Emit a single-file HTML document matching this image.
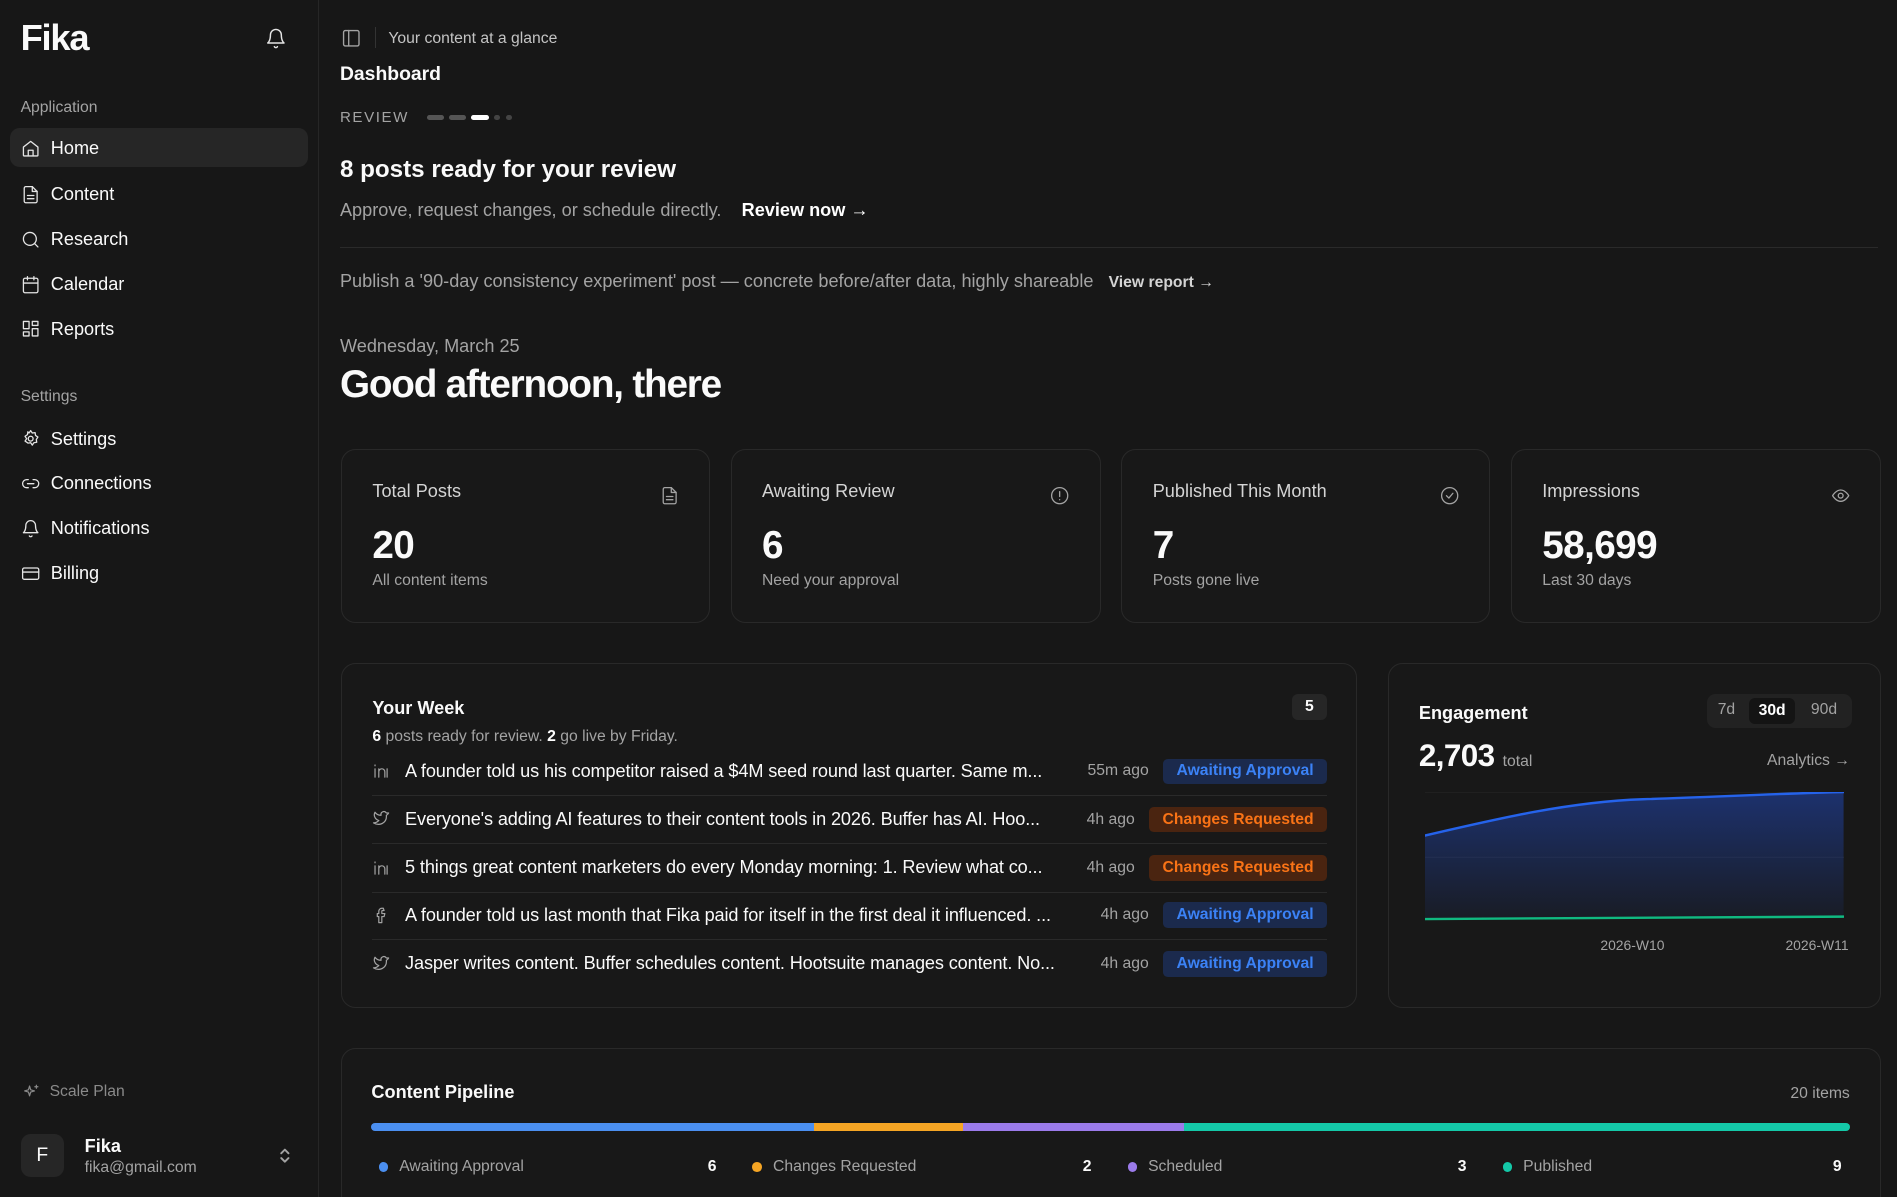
<!DOCTYPE html>
<html><head><meta charset="utf-8"><style>
*{box-sizing:border-box;margin:0;padding:0}
html,body{width:1897px;height:1197px;overflow:hidden;background:#171717}
#z{zoom:1.2098;width:1568px;height:990px;position:relative;font-family:"Liberation Sans",sans-serif;color:#fafafa;background:#171717}
.a{position:absolute;white-space:nowrap}
.g{color:#a3a3a3}
svg{fill:none;stroke:currentColor;stroke-width:1.6;stroke-linecap:round;stroke-linejoin:round}
.side{position:absolute;left:0;top:0;width:264px;height:990px;border-right:1px solid #262626}
.nav{position:absolute;left:17px;font-size:15px;display:flex;align-items:center;gap:9px;height:20px}
.nav svg{width:16px;height:16px;color:#e5e5e5}
.card{position:absolute;border:1px solid #292929;border-radius:12px;background:#181818}
.st .t{position:absolute;left:25px;top:26px;font-size:15px;color:#d4d4d4}
.st .n{position:absolute;left:25px;top:61px;font-size:32px;font-weight:bold;letter-spacing:-.5px}
.st .s{position:absolute;left:25px;top:101px;font-size:13px;color:#a3a3a3}
.st svg{position:absolute;right:25px;top:30px;width:16px;height:16px;color:#a3a3a3}
.row{position:absolute;left:25px;width:789px;height:40px;display:flex;align-items:center;font-size:15px;border-bottom:1px solid #2a2a2a}
.row svg{width:15px;height:15px;color:#a3a3a3;margin-right:12px;flex:none}
.row .tx{flex:1;overflow:hidden;white-space:nowrap;letter-spacing:-.1px}
.row .tm{font-size:13px;color:#a3a3a3;margin:0 12px 0 10px}
.bd{font-size:13px;font-weight:bold;padding:3px 11px;border-radius:4px}
.bl{background:#1b2a4d;color:#3b82f6}.or{background:#4a2410;color:#f97316}
.lg{position:absolute;top:957px;font-size:13px;color:#a3a3a3;display:flex;align-items:center}
.lg i{display:inline-block;width:8px;height:8px;border-radius:50%;margin-right:9px}
.lc{position:absolute;top:957px;font-size:13px;font-weight:bold}
</style></head><body><div id="z">
<div class="side">
<div class="a" style="left:17px;top:14px;font-size:30px;font-weight:bold;letter-spacing:-1px">Fika</div>
<svg class="a" style="left:219px;top:22px;width:18px;height:19px;color:#e5e5e5" viewBox="0 0 24 24"><path d="M6 8a6 6 0 0 1 12 0c0 7 3 9 3 9H3s3-2 3-9"/><path d="M10.3 21a1.9 1.9 0 0 0 3.4 0"/></svg>
<div class="a g" style="left:17px;top:82px;font-size:13px">Application</div>
<div class="a" style="left:8px;top:106px;width:247px;height:32px;background:#262626;border-radius:8px"></div>
<div class="nav" style="top:113px"><svg viewBox="0 0 24 24"><path d="M3 10l9-7 9 7v10a1 1 0 0 1-1 1H4a1 1 0 0 1-1-1z"/><path d="M9 21v-7h6v7"/></svg>Home</div>
<div class="nav" style="top:151px"><svg viewBox="0 0 24 24"><path d="M14 2H6a2 2 0 0 0-2 2v16a2 2 0 0 0 2 2h12a2 2 0 0 0 2-2V8z"/><path d="M14 2v6h6M8 13h8M8 17h8"/></svg>Content</div>
<div class="nav" style="top:188px"><svg viewBox="0 0 24 24"><circle cx="11" cy="11" r="8"/><path d="M21 21l-4.3-4.3"/></svg>Research</div>
<div class="nav" style="top:225px"><svg viewBox="0 0 24 24"><rect x="3" y="4" width="18" height="18" rx="2"/><path d="M16 2v4M8 2v4M3 10h18"/></svg>Calendar</div>
<div class="nav" style="top:262px"><svg viewBox="0 0 24 24"><rect x="3" y="3" width="7" height="9"/><rect x="14" y="3" width="7" height="5"/><rect x="14" y="12" width="7" height="9"/><rect x="3" y="16" width="7" height="5"/></svg>Reports</div>
<div class="a g" style="left:17px;top:321px;font-size:13px">Settings</div>
<div class="nav" style="top:353px"><svg viewBox="0 0 24 24"><circle cx="12" cy="12" r="3"/><path d="M12 2l2 3 3.5-.5.5 3.5 3 2-2 3 .5 3.5-3.5.5-2 3-2-3-3.5.5L8 17l-3-2 2-3-2-3 3-2 .5-3.5L10 5z"/></svg>Settings</div>
<div class="nav" style="top:390px"><svg viewBox="0 0 24 24"><path d="M9 17H7a5 5 0 0 1 0-10h2M15 7h2a5 5 0 0 1 0 10h-2M8 12h8"/></svg>Connections</div>
<div class="nav" style="top:427px"><svg viewBox="0 0 24 24"><path d="M6 8a6 6 0 0 1 12 0c0 7 3 9 3 9H3s3-2 3-9"/><path d="M10.3 21a1.9 1.9 0 0 0 3.4 0"/></svg>Notifications</div>
<div class="nav" style="top:464px"><svg viewBox="0 0 24 24"><rect x="2" y="5" width="20" height="14" rx="2"/><path d="M2 10h20"/></svg>Billing</div>
<div class="a g" style="left:18px;top:895px;font-size:13px;display:flex;align-items:center;gap:8px;color:#8a8a8a"><svg style="width:15px;height:15px" viewBox="0 0 24 24"><path d="M10 4l1.5 5 5 1.5-5 1.5L10 17l-1.5-5-5-1.5 5-1.5z"/><path d="M19 3v4M17 5h4"/></svg>Scale Plan</div>
<div class="a" style="left:17px;top:937px;width:36px;height:36px;background:#262626;border-radius:8px;text-align:center;line-height:36px;font-size:16px">F</div>
<div class="a" style="left:70px;top:939px;font-size:15px;font-weight:bold">Fika</div>
<div class="a g" style="left:70px;top:958px;font-size:13px">fika@gmail.com</div>
<svg class="a" style="left:229px;top:947px;width:13px;height:16px;color:#a3a3a3" viewBox="0 0 12 16"><path d="M3 6l3-3 3 3M3 10l3 3 3-3"/></svg>
</div>

<svg class="a" style="left:282px;top:23px;width:17px;height:17px;color:#a3a3a3" viewBox="0 0 24 24"><rect x="3" y="3" width="18" height="18" rx="2"/><path d="M9 3v18"/></svg>
<div class="a" style="left:310px;top:22px;width:1px;height:18px;background:#333"></div>
<div class="a" style="left:321px;top:25px;font-size:13px;color:#c4c4c4">Your content at a glance</div>
<div class="a" style="left:281px;top:52px;font-size:16px;font-weight:bold">Dashboard</div>
<div class="a g" style="left:281px;top:90px;font-size:12.5px;letter-spacing:1.3px">REVIEW</div>
<div class="a" style="left:353px;top:95px;width:14px;height:4px;border-radius:2px;background:#555"></div>
<div class="a" style="left:371px;top:95px;width:14px;height:4px;border-radius:2px;background:#555"></div>
<div class="a" style="left:389px;top:95px;width:15px;height:4px;border-radius:2px;background:#fff"></div>
<div class="a" style="left:408px;top:95px;width:5px;height:4px;border-radius:2px;background:#444"></div>
<div class="a" style="left:418px;top:95px;width:5px;height:4px;border-radius:2px;background:#444"></div>
<div class="a" style="left:281px;top:129px;font-size:20px;font-weight:bold">8 posts ready for your review</div>
<div class="a g" style="left:281px;top:165px;font-size:15px">Approve, request changes, or schedule directly.&nbsp;&nbsp;&nbsp;&nbsp;<b style="color:#fff">Review now →</b></div>
<div class="a" style="left:281px;top:204px;width:1271px;height:1px;background:#2a2a2a"></div>
<div class="a g" style="left:281px;top:224px;font-size:15px">Publish a '90-day consistency experiment' post — concrete before/after data, highly shareable&nbsp;&nbsp;&nbsp;<b style="font-size:13px;color:#d4d4d4">View report →</b></div>
<div class="a g" style="left:281px;top:278px;font-size:15px">Wednesday, March 25</div>
<div class="a" style="left:281px;top:300px;font-size:32px;font-weight:bold;letter-spacing:-1px">Good afternoon, there</div>

<div class="card st" style="left:282px;top:371px;width:305px;height:144px"><div class="t">Total Posts</div><svg viewBox="0 0 24 24"><path d="M14 2H6a2 2 0 0 0-2 2v16a2 2 0 0 0 2 2h12a2 2 0 0 0 2-2V8z"/><path d="M14 2v6h6M8 13h8M8 17h8"/></svg><div class="n">20</div><div class="s">All content items</div></div>
<div class="card st" style="left:604px;top:371px;width:306px;height:144px"><div class="t">Awaiting Review</div><svg viewBox="0 0 24 24"><circle cx="12" cy="12" r="10"/><path d="M12 7v6M12 17h.01"/></svg><div class="n">6</div><div class="s">Need your approval</div></div>
<div class="card st" style="left:927px;top:371px;width:305px;height:144px"><div class="t">Published This Month</div><svg viewBox="0 0 24 24"><circle cx="12" cy="12" r="10"/><path d="M8 12l3 3 5-6"/></svg><div class="n">7</div><div class="s">Posts gone live</div></div>
<div class="card st" style="left:1249px;top:371px;width:306px;height:144px"><div class="t">Impressions</div><svg viewBox="0 0 24 24"><path d="M2 12s4-7 10-7 10 7 10 7-4 7-10 7S2 12 2 12z"/><circle cx="12" cy="12" r="3"/></svg><div class="n">58,699</div><div class="s">Last 30 days</div></div>

<div class="card" style="left:282px;top:548px;width:840px;height:285px">
<div class="a" style="left:25px;top:28px;font-size:15px;font-weight:bold">Your Week</div>
<div class="a" style="left:785px;top:25px;width:29px;height:21px;border-radius:5px;background:#262626;text-align:center;font-size:13px;font-weight:bold;line-height:21px">5</div>
<div class="a g" style="left:25px;top:53px;font-size:13px"><b style="color:#fff">6</b> posts ready for review. <b style="color:#fff">2</b> go live by Friday.</div>
<div class="row" style="top:69px"><svg viewBox="0 0 24 24"><path d="M4 9v11M4 4v1M9 20V9M9 13a4 4 0 0 1 8 0v7M20 20V9"/></svg><span class="tx">A founder told us his competitor raised a $4M seed round last quarter. Same m...</span><span class="tm">55m ago</span><span class="bd bl">Awaiting Approval</span></div>
<div class="row" style="top:109px"><svg viewBox="0 0 24 24"><path d="M22 4s-1 2-3 3c1 10-9 15-17 10 3 0 5-1 7-3-6-2-7-8-5-11 2 3 5 4 8 4-1-4 4-7 7-3 1 0 3 0 3 0z"/></svg><span class="tx">Everyone's adding AI features to their content tools in 2026. Buffer has AI. Hoo...</span><span class="tm">4h ago</span><span class="bd or">Changes Requested</span></div>
<div class="row" style="top:149px"><svg viewBox="0 0 24 24"><path d="M4 9v11M4 4v1M9 20V9M9 13a4 4 0 0 1 8 0v7M20 20V9"/></svg><span class="tx">5 things great content marketers do every Monday morning: 1. Review what co...</span><span class="tm">4h ago</span><span class="bd or">Changes Requested</span></div>
<div class="row" style="top:188px"><svg viewBox="0 0 24 24"><path d="M15 3h-2a4 4 0 0 0-4 4v3H7v4h2v8h4v-8h3l1-4h-4V7a1 1 0 0 1 1-1h2z"/></svg><span class="tx">A founder told us last month that Fika paid for itself in the first deal it influenced. ...</span><span class="tm">4h ago</span><span class="bd bl">Awaiting Approval</span></div>
<div class="row" style="top:228px;border:none"><svg viewBox="0 0 24 24"><path d="M22 4s-1 2-3 3c1 10-9 15-17 10 3 0 5-1 7-3-6-2-7-8-5-11 2 3 5 4 8 4-1-4 4-7 7-3 1 0 3 0 3 0z"/></svg><span class="tx">Jasper writes content. Buffer schedules content. Hootsuite manages content. No...</span><span class="tm">4h ago</span><span class="bd bl">Awaiting Approval</span></div>
</div>

<div class="card" style="left:1147px;top:548px;width:408px;height:285px">
<div class="a" style="left:25px;top:32px;font-size:15px;font-weight:bold">Engagement</div>
<div class="a" style="left:263px;top:25px;width:120px;height:28px;border-radius:7px;background:#222;font-size:13px;color:#a3a3a3">
<span class="a" style="left:9px;top:6px">7d</span><span class="a" style="left:35px;top:3px;width:38px;height:22px;background:#141414;border-radius:5px;color:#fff;font-weight:bold;text-align:center;line-height:22px">30d</span><span class="a" style="left:86px;top:6px">90d</span></div>
<div class="a" style="left:25px;top:61px;font-size:26px;font-weight:bold;letter-spacing:-.5px">2,703 <span style="font-size:13px;font-weight:normal;color:#a3a3a3;letter-spacing:0">total</span></div>
<div class="a g" style="right:25px;top:73px;font-size:13px">Analytics →</div>
<svg class="a" style="left:30px;top:106px;width:346px;height:108px;stroke:none" viewBox="0 0 346 108"><defs><linearGradient id="gr" x1="0" y1="0" x2="0" y2="1"><stop offset="0" stop-color="#1e3a8a" stop-opacity=".75"/><stop offset="1" stop-color="#1e3a8a" stop-opacity=".12"/></linearGradient></defs>
<line x1="0" y1="0" x2="346" y2="0" stroke="#262626" stroke-width="1"/><line x1="0" y1="54" x2="346" y2="54" stroke="#262626" stroke-width="1"/>
<path d="M0 36C60 22 120 8 180 6S300 1 346 0V104H0z" fill="url(#gr)"/>
<path d="M0 36C60 22 120 8 180 6S300 1 346 0" stroke="#2563eb" stroke-width="2" fill="none"/>
<path d="M0 105L346 103" stroke="#10b981" stroke-width="2" fill="none"/></svg>
<div class="a g" style="left:175px;top:226px;font-size:11.5px">2026-W10</div>
<div class="a g" style="left:328px;top:226px;font-size:11.5px">2026-W11</div>
</div>

<div class="card" style="left:282px;top:866px;width:1273px;height:140px"></div>
<div class="a" style="left:307px;top:894px;font-size:15px;font-weight:bold">Content Pipeline</div>
<div class="a g" style="right:39px;top:897px;font-size:13px">20 items</div>
<div class="a" style="left:307px;top:928px;width:1222px;height:7px;border-radius:4px;overflow:hidden;display:flex"><div style="width:366px;background:#4b8ff0"></div><div style="width:123px;background:#f5a524"></div><div style="width:183px;background:#9b7bea"></div><div style="flex:1;background:#14c8a8"></div></div>
<div class="lg" style="left:313px"><i style="background:#4b8ff0"></i>Awaiting Approval</div><div class="lc" style="left:585px">6</div>
<div class="lg" style="left:622px"><i style="background:#f5a524"></i>Changes Requested</div><div class="lc" style="left:895px">2</div>
<div class="lg" style="left:932px"><i style="background:#9b7bea"></i>Scheduled</div><div class="lc" style="left:1205px">3</div>
<div class="lg" style="left:1242px"><i style="background:#14c8a8"></i>Published</div><div class="lc" style="left:1515px">9</div>
</div></body></html>
